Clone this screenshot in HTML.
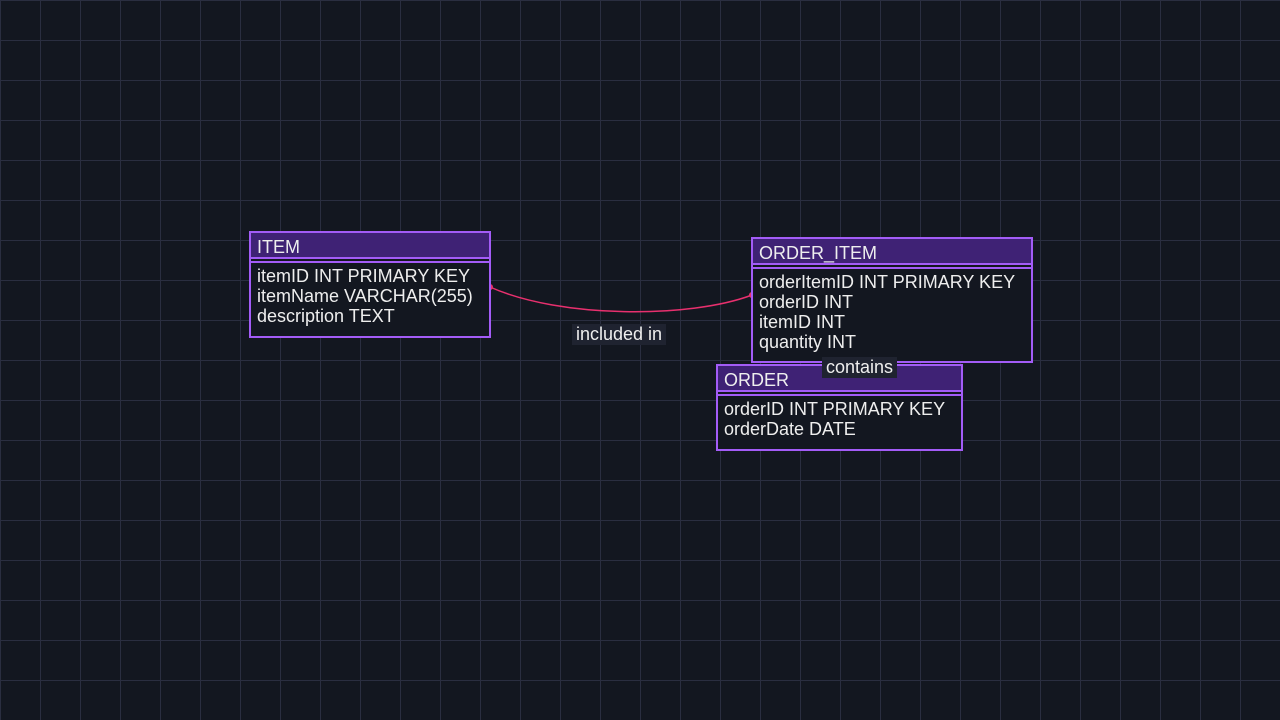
<!DOCTYPE html>
<html><head><meta charset="utf-8"><style>
html,body{margin:0;padding:0;width:1280px;height:720px;overflow:hidden;background:#131720;}
body{background-color:#131720;background-image:linear-gradient(to right,#2a2e40 1px,transparent 1px),linear-gradient(to bottom,#2a2e40 1px,transparent 1px);background-size:40px 40px;font-family:"Liberation Sans",sans-serif;position:relative;}
.t{position:absolute;border:2px solid #a35cf7;box-sizing:border-box;background:#131720;}
.h{background:#3f2275;border-bottom:2px solid #a35cf7;color:#eee;font-size:18px;padding-left:6px;line-height:29px;box-sizing:border-box;height:26px;}
.b{border-top:2px solid #a35cf7;margin-top:2px;color:#eee;font-size:18px;line-height:20px;padding:3px 6px;}
.l{position:absolute;background:#1f2330;color:#eee;font-size:18px;line-height:21px;padding:0 4px;}
svg{position:absolute;left:0;top:0;}
</style></head><body>
<svg width="1280" height="720"><path d="M490 287 C560 318.5 690 318.5 752 295" fill="none" stroke="#e8306e" stroke-width="1.5"/><circle cx="490" cy="287" r="3" fill="#e8306e"/><circle cx="752" cy="295" r="3" fill="#e8306e"/></svg>
<div class="t" style="left:249px;top:231px;width:242px;height:107px"><div class="h">ITEM</div><div class="b">itemID INT PRIMARY KEY<br>itemName VARCHAR(255)<br>description TEXT</div></div>
<div class="t" style="left:751px;top:237px;width:282px;height:126px"><div class="h">ORDER_ITEM</div><div class="b">orderItemID INT PRIMARY KEY<br>orderID INT<br>itemID INT<br>quantity INT</div></div>
<div class="t" style="left:716px;top:364px;width:247px;height:87px"><div class="h">ORDER</div><div class="b">orderID INT PRIMARY KEY<br>orderDate DATE</div></div>
<div class="l" style="left:572px;top:324px">included in</div>
<div class="l" style="left:822px;top:357px">contains</div>
</body></html>
